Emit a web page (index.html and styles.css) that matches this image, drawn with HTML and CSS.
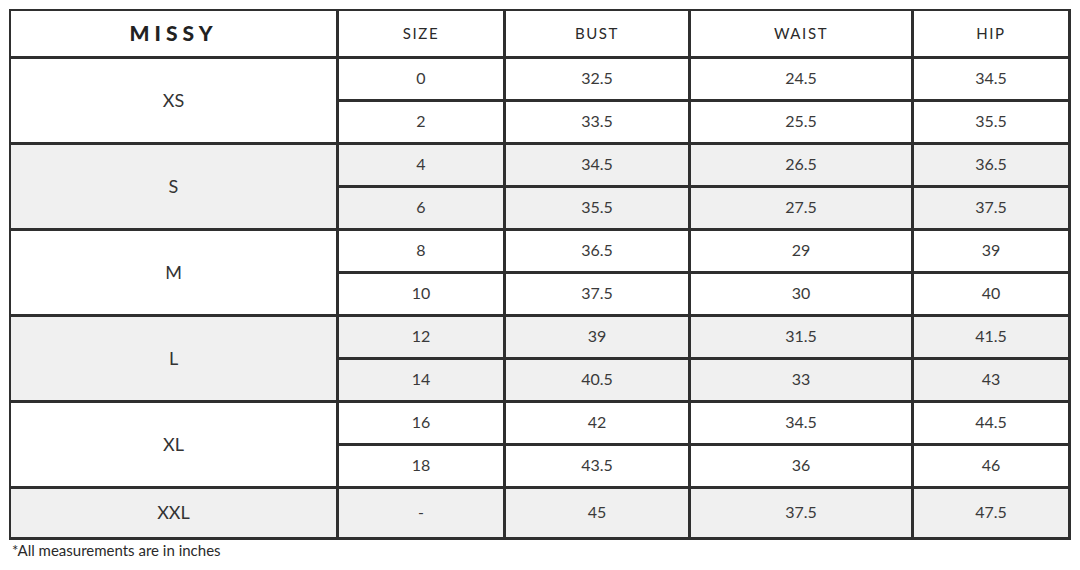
FILE: index.html
```html
<!DOCTYPE html>
<html>
<head>
<meta charset="utf-8">
<link rel="stylesheet" href="styles.css">
</head>
<body>
<div class="chart">
  <table class="size-table">
    <colgroup>
      <col class="c-group"><col class="c-size"><col class="c-bust"><col class="c-waist"><col class="c-hip">
    </colgroup>
    <thead>
      <tr class="head">
        <th class="brand">MISSY</th>
        <th>SIZE</th>
        <th>BUST</th>
        <th>WAIST</th>
        <th>HIP</th>
      </tr>
    </thead>
    <tbody>
      <tr><td class="grp" rowspan="2">XS</td><td>0</td><td>32.5</td><td>24.5</td><td>34.5</td></tr>
      <tr><td>2</td><td>33.5</td><td>25.5</td><td>35.5</td></tr>
      <tr class="alt"><td class="grp" rowspan="2">S</td><td>4</td><td>34.5</td><td>26.5</td><td>36.5</td></tr>
      <tr class="alt"><td>6</td><td>35.5</td><td>27.5</td><td>37.5</td></tr>
      <tr><td class="grp" rowspan="2">M</td><td>8</td><td>36.5</td><td>29</td><td>39</td></tr>
      <tr><td>10</td><td>37.5</td><td>30</td><td>40</td></tr>
      <tr class="alt"><td class="grp" rowspan="2">L</td><td>12</td><td>39</td><td>31.5</td><td>41.5</td></tr>
      <tr class="alt"><td>14</td><td>40.5</td><td>33</td><td>43</td></tr>
      <tr><td class="grp" rowspan="2">XL</td><td>16</td><td>42</td><td>34.5</td><td>44.5</td></tr>
      <tr><td>18</td><td>43.5</td><td>36</td><td>46</td></tr>
      <tr class="alt last"><td class="grp">XXL</td><td>-</td><td>45</td><td>37.5</td><td>47.5</td></tr>
    </tbody>
  </table>
  <p class="note">*All measurements are in inches</p>
</div>
</body>
</html>
```

FILE: styles.css
```css
html, body {
  margin: 0;
  padding: 0;
  background: #ffffff;
}

body {
  font-family: "Lato", "Liberation Sans", sans-serif;
  color: #333333;
}

.chart {
  padding: 9px 0 0 9px;
}

.size-table {
  border-collapse: separate;
  border-spacing: 0;
  border-top: 2px solid #2f2f2f;
  border-left: 2px solid #2f2f2f;
  table-layout: fixed;
  width: 1062px;
  box-sizing: border-box;
}

.c-group { width: 328px; }
.c-size { width: 167px; }
.c-bust { width: 185px; }
.c-waist { width: 223px; }
.c-hip { width: 157px; }

.size-table th,
.size-table td {
  border-right: 3px solid #2f2f2f;
  border-bottom: 3px solid #2f2f2f;
  text-align: center;
  vertical-align: middle;
  padding: 0;
  box-sizing: border-box;
}

.size-table th {
  height: 48px;
  padding-bottom: 2px;
  font-weight: 400;
  font-size: 15px;
  letter-spacing: 1.6px;
  color: #2a2a2a;
}

.size-table th.brand {
  font-size: 21px;
  font-weight: 900;
  letter-spacing: 5px;
  color: #222222;
}

.size-table td {
  height: 43px;
  padding-bottom: 3px;
  font-size: 16px;
  color: #3a3a3a;
}

.size-table td.grp {
  font-size: 18px;
  padding-bottom: 2px;
  color: #333333;
}

.size-table tr.alt td {
  background: #f0f0f0;
}

.size-table tr.last td {
  height: 51px;
}

.note {
  margin: 0 0 0 3px;
  font-size: 15px;
  line-height: 20px;
  color: #2a2a2a;
}
```
